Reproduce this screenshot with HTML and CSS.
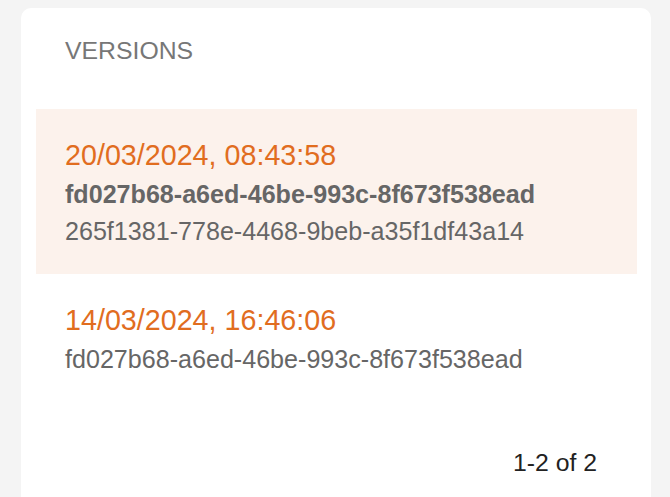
FILE: index.html
```html
<!DOCTYPE html>
<html lang="en">
<head>
<meta charset="utf-8">
<title>Versions</title>
<link rel="stylesheet" href="styles.css">
</head>
<body>
<div class="page">
  <section class="card">
    <h2 class="card-title">VERSIONS</h2>
    <ul class="version-list">
      <li class="version selected">
        <div class="version-date">20/03/2024, 08:43:58</div>
        <div class="version-id strong">fd027b68-a6ed-46be-993c-8f673f538ead</div>
        <div class="version-id">265f1381-778e-4468-9beb-a35f1df43a14</div>
      </li>
      <li class="version">
        <div class="version-date">14/03/2024, 16:46:06</div>
        <div class="version-id">fd027b68-a6ed-46be-993c-8f673f538ead</div>
      </li>
    </ul>
    <div class="pagination">1-2 of 2</div>
  </section>
</div>
</body>
</html>
```

FILE: styles.css
```css
html, body {
  margin: 0;
  padding: 0;
  background: #f4f4f4;
  height: 100%;
  overflow: hidden;
}
body {
  font-family: "Liberation Sans", Arial, Helvetica, sans-serif;
  font-size: 25px;
  line-height: 1.5;
}
.page {
  padding: 8px 19px 0 21px;
  height: 100%;
  box-sizing: border-box;
}
.card {
  background: #ffffff;
  border-radius: 10px 10px 0 0;
  padding: 25px 14px 0 15px;
  height: 100%;
  box-sizing: border-box;
}
.card-title {
  margin: 0 0 39px 0;
  padding-left: 29px;
  font-size: 24.8px;
  font-weight: normal;
  line-height: 36.75px;
  color: #777777;
}
.version-list {
  list-style: none;
  margin: 0;
  padding: 0;
}
.version {
  padding: 25px 29px 25px 29px;
}
.version.selected {
  background: #fcf2ec;
}
.version-date {
  font-size: 28.7px;
  line-height: 42px;
  color: #e16d1f;
}
.version-id {
  font-size: 25.1px;
  line-height: 36.75px;
  color: #666666;
}
.version-id.strong {
  font-weight: bold;
}
.pagination {
  display: flex;
  justify-content: flex-end;
  padding: 42px 40px 0 0;
  font-size: 24.8px;
  line-height: 36.75px;
  color: #222222;
}
```
